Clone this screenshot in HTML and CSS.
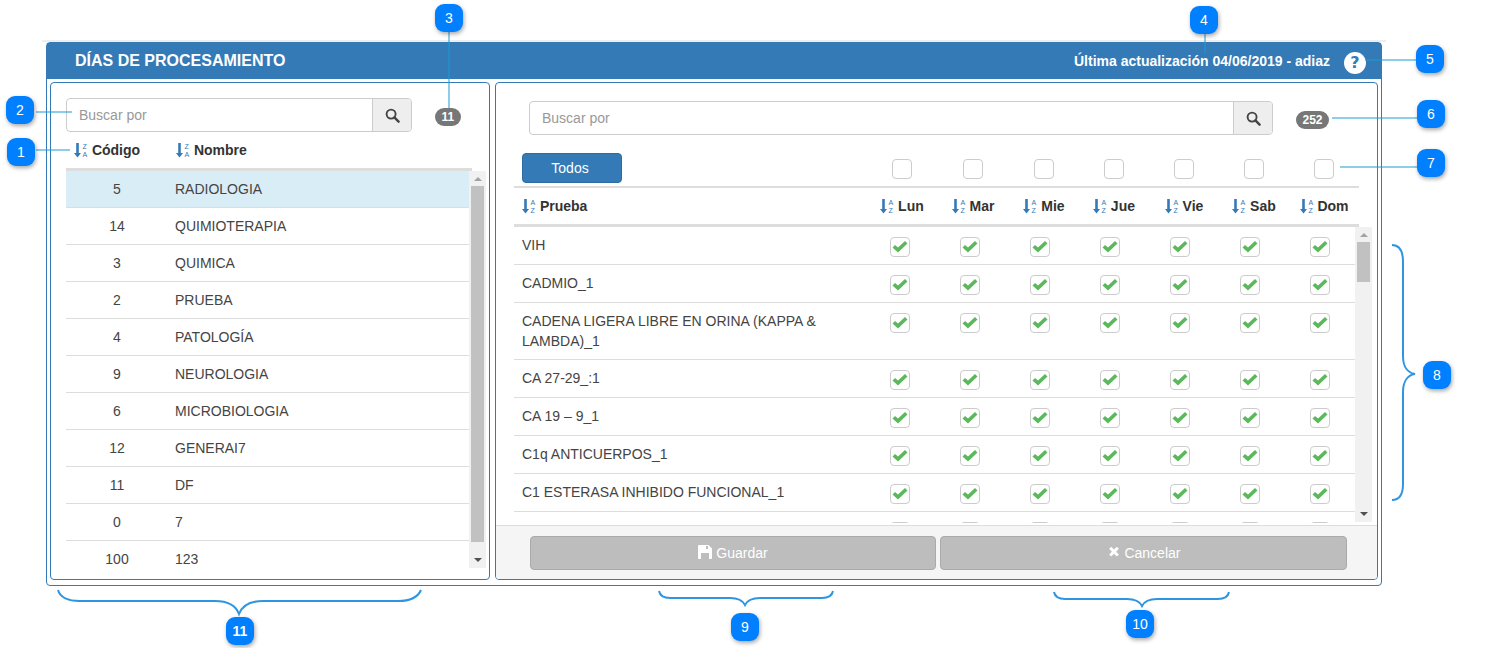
FILE: index.html
```html
<!DOCTYPE html>
<html lang="en">
<head>
  <meta charset="UTF-8" />
  <title>Días de procesamiento</title>
  <link rel="stylesheet" href="styles.css">
</head>
<body>

  <svg class="defs" width="0" height="0">
    <symbol id="i-check" viewBox="0 0 18 18"><path d="M1.500 9.500 4 7 7 9.500 14 3 16.500 5.500 7 14.500z"/></symbol>
    <symbol id="i-search" viewBox="0 0 16 16"><circle cx="6.500" cy="6.500" r="4.800" fill="none" stroke-width="2"/><path d="M10 10l4.500 4.500" fill="none" stroke-width="2.600" stroke-linecap="round"/></symbol>
    <symbol id="i-arrow" viewBox="0 0 14 16"><path d="M2.200 1h2.600v10h2.200L3.500 15.500 0 11h2.200z"/></symbol>
  </svg>

  <div class="page">
    <div class="top-rule"></div>

    <div class="card">
      <header class="card-head">
        <h1>DÍAS DE PROCESAMIENTO</h1>
        <span class="updated">Última actualización 04/06/2019 - adiaz</span>
        <span class="help">?</span>
      </header>

      <div class="panels">
        <!-- areas -->
        <section class="panel panel-left">
          <div class="search-row">
            <div class="search search-sm">
              <span class="search-text">Buscar por</span>
              <span class="search-btn"><svg class="ico-search"><use href="#i-search"/></svg></span>
            </div>
            <span class="badge badge-sm">11</span>
          </div>

          <div class="area-head">
            <span class="area-code"><svg class="ico-sort" viewBox="0 0 14 16"><use href="#i-arrow"/><text x="8.500" y="6.500" class="mini">Z</text><text x="8.500" y="14.500" class="mini">A</text></svg> Código</span>
            <span class="area-name"><svg class="ico-sort" viewBox="0 0 14 16"><use href="#i-arrow"/><text x="8.500" y="6.500" class="mini">Z</text><text x="8.500" y="14.500" class="mini">A</text></svg> Nombre</span>
          </div>

          <div class="area-body">
            <div class="area-list">
              <div class="area-row selected"><span>5</span><span>RADIOLOGIA</span></div>
              <div class="area-row"><span>14</span><span>QUIMIOTERAPIA</span></div>
              <div class="area-row"><span>3</span><span>QUIMICA</span></div>
              <div class="area-row"><span>2</span><span>PRUEBA</span></div>
              <div class="area-row"><span>4</span><span>PATOLOGÍA</span></div>
              <div class="area-row"><span>9</span><span>NEUROLOGIA</span></div>
              <div class="area-row"><span>6</span><span>MICROBIOLOGIA</span></div>
              <div class="area-row"><span>12</span><span>GENERAI7</span></div>
              <div class="area-row"><span>11</span><span>DF</span></div>
              <div class="area-row"><span>0</span><span>7</span></div>
              <div class="area-row"><span>100</span><span>123</span></div>
            </div>
            <div class="scrollbar scrollbar-left">
              <i class="arrow-up"></i>
              <i class="thumb"></i>
              <i class="arrow-down"></i>
            </div>
          </div>
        </section>

        <!-- pruebas -->
        <section class="panel panel-right">
          <div class="test-main">
            <div class="search-row search-row-right">
              <div class="search search-lg">
                <span class="search-text">Buscar por</span>
                <span class="search-btn"><svg class="ico-search"><use href="#i-search"/></svg></span>
              </div>
              <span class="badge badge-lg">252</span>
            </div>

            <div class="day-grid toolbar">
              <div><button class="btn-all">Todos</button></div>
              <i class="box"></i><i class="box"></i><i class="box"></i><i class="box"></i><i class="box"></i><i class="box"></i><i class="box"></i>
            </div>

            <div class="day-grid test-head">
              <span class="test-title"><svg class="ico-sort" viewBox="0 0 14 16"><use href="#i-arrow"/><text x="8.500" y="6.500" class="mini">A</text><text x="8.500" y="14.500" class="mini">Z</text></svg> Prueba</span>
              <span><svg class="ico-sort" viewBox="0 0 14 16"><use href="#i-arrow"/><text x="8.500" y="6.500" class="mini">A</text><text x="8.500" y="14.500" class="mini">Z</text></svg> Lun</span>
              <span><svg class="ico-sort" viewBox="0 0 14 16"><use href="#i-arrow"/><text x="8.500" y="6.500" class="mini">A</text><text x="8.500" y="14.500" class="mini">Z</text></svg> Mar</span>
              <span><svg class="ico-sort" viewBox="0 0 14 16"><use href="#i-arrow"/><text x="8.500" y="6.500" class="mini">A</text><text x="8.500" y="14.500" class="mini">Z</text></svg> Mie</span>
              <span><svg class="ico-sort" viewBox="0 0 14 16"><use href="#i-arrow"/><text x="8.500" y="6.500" class="mini">A</text><text x="8.500" y="14.500" class="mini">Z</text></svg> Jue</span>
              <span><svg class="ico-sort" viewBox="0 0 14 16"><use href="#i-arrow"/><text x="8.500" y="6.500" class="mini">A</text><text x="8.500" y="14.500" class="mini">Z</text></svg> Vie</span>
              <span><svg class="ico-sort" viewBox="0 0 14 16"><use href="#i-arrow"/><text x="8.500" y="6.500" class="mini">A</text><text x="8.500" y="14.500" class="mini">Z</text></svg> Sab</span>
              <span><svg class="ico-sort" viewBox="0 0 14 16"><use href="#i-arrow"/><text x="8.500" y="6.500" class="mini">A</text><text x="8.500" y="14.500" class="mini">Z</text></svg> Dom</span>
            </div>

            <div class="test-body">
              <div class="test-list">
                <div class="test-row"><span class="test-name">VIH</span>
                  <i class="box on"><svg><use href="#i-check"/></svg></i><i class="box on"><svg><use href="#i-check"/></svg></i><i class="box on"><svg><use href="#i-check"/></svg></i><i class="box on"><svg><use href="#i-check"/></svg></i><i class="box on"><svg><use href="#i-check"/></svg></i><i class="box on"><svg><use href="#i-check"/></svg></i><i class="box on"><svg><use href="#i-check"/></svg></i>
                </div>
                <div class="test-row"><span class="test-name">CADMIO_1</span>
                  <i class="box on"><svg><use href="#i-check"/></svg></i><i class="box on"><svg><use href="#i-check"/></svg></i><i class="box on"><svg><use href="#i-check"/></svg></i><i class="box on"><svg><use href="#i-check"/></svg></i><i class="box on"><svg><use href="#i-check"/></svg></i><i class="box on"><svg><use href="#i-check"/></svg></i><i class="box on"><svg><use href="#i-check"/></svg></i>
                </div>
                <div class="test-row"><span class="test-name">CADENA LIGERA LIBRE EN ORINA (KAPPA &amp; LAMBDA)_1</span>
                  <i class="box on"><svg><use href="#i-check"/></svg></i><i class="box on"><svg><use href="#i-check"/></svg></i><i class="box on"><svg><use href="#i-check"/></svg></i><i class="box on"><svg><use href="#i-check"/></svg></i><i class="box on"><svg><use href="#i-check"/></svg></i><i class="box on"><svg><use href="#i-check"/></svg></i><i class="box on"><svg><use href="#i-check"/></svg></i>
                </div>
                <div class="test-row"><span class="test-name">CA 27-29_:1</span>
                  <i class="box on"><svg><use href="#i-check"/></svg></i><i class="box on"><svg><use href="#i-check"/></svg></i><i class="box on"><svg><use href="#i-check"/></svg></i><i class="box on"><svg><use href="#i-check"/></svg></i><i class="box on"><svg><use href="#i-check"/></svg></i><i class="box on"><svg><use href="#i-check"/></svg></i><i class="box on"><svg><use href="#i-check"/></svg></i>
                </div>
                <div class="test-row"><span class="test-name">CA 19 – 9_1</span>
                  <i class="box on"><svg><use href="#i-check"/></svg></i><i class="box on"><svg><use href="#i-check"/></svg></i><i class="box on"><svg><use href="#i-check"/></svg></i><i class="box on"><svg><use href="#i-check"/></svg></i><i class="box on"><svg><use href="#i-check"/></svg></i><i class="box on"><svg><use href="#i-check"/></svg></i><i class="box on"><svg><use href="#i-check"/></svg></i>
                </div>
                <div class="test-row"><span class="test-name">C1q ANTICUERPOS_1</span>
                  <i class="box on"><svg><use href="#i-check"/></svg></i><i class="box on"><svg><use href="#i-check"/></svg></i><i class="box on"><svg><use href="#i-check"/></svg></i><i class="box on"><svg><use href="#i-check"/></svg></i><i class="box on"><svg><use href="#i-check"/></svg></i><i class="box on"><svg><use href="#i-check"/></svg></i><i class="box on"><svg><use href="#i-check"/></svg></i>
                </div>
                <div class="test-row"><span class="test-name">C1 ESTERASA INHIBIDO FUNCIONAL_1</span>
                  <i class="box on"><svg><use href="#i-check"/></svg></i><i class="box on"><svg><use href="#i-check"/></svg></i><i class="box on"><svg><use href="#i-check"/></svg></i><i class="box on"><svg><use href="#i-check"/></svg></i><i class="box on"><svg><use href="#i-check"/></svg></i><i class="box on"><svg><use href="#i-check"/></svg></i><i class="box on"><svg><use href="#i-check"/></svg></i>
                </div>
                <div class="test-row"><span class="test-name"></span>
                  <i class="box on"></i><i class="box on"></i><i class="box on"></i><i class="box on"></i><i class="box on"></i><i class="box on"></i><i class="box on"></i>
                </div>
              </div>
              <div class="scrollbar scrollbar-right">
                <i class="arrow-up"></i>
                <i class="thumb"></i>
                <i class="arrow-down"></i>
              </div>
            </div>
          </div>

          <footer class="panel-foot">
            <button class="btn-off btn-save"><svg class="ico-save" viewBox="0 0 14 14"><path fill-rule="evenodd" d="M0 1a1 1 0 0 1 1-1H10.500L14 3.500V13a1 1 0 0 1-1 1H1a1 1 0 0 1-1-1zM8 1v3h2V1zM3 8v6h8V8z"/></svg> Guardar</button>
            <button class="btn-off"><svg class="ico-times" viewBox="0 0 1408 1792"><path d="M1298 1214q0 40-28 68l-136 136q-28 28-68 28t-68-28l-294-294-294 294q-28 28-68 28t-68-28l-136-136q-28-28-28-68t28-68l294-294-294-294q-28-28-28-68t28-68l136-136q28-28 68-28t68 28l294 294 294-294q28-28 68-28t68 28l136 136q28 28 28 68t-28 68l-294 294 294 294q28 28 28 68z"/></svg> Cancelar</button>
          </footer>
        </section>
      </div>
    </div>

    <!-- callouts over the screenshot -->
    <svg class="callouts" width="1496" height="648" viewBox="0 0 1496 648">
      <g class="leader">
        <path d="M36 150H70"/>
        <path d="M36 112H72"/>
        <path d="M449 32V108"/>
        <path d="M1205 34V53"/>
        <path d="M1365 60H1416"/>
        <path d="M1332 118H1417"/>
        <path d="M1340 167H1417"/>
      </g>
      <g class="brace">
        <path d="M1392 245C1400 245 1403 252 1403 262V356C1403 367 1408 373 1415 374C1408 375 1403 381 1403 392V484C1403 494 1400 500 1392 500"/>
        <path d="M58 590C60 597 68 601 80 601H215C228 601 236 606 239 614C242 606 250 601 263 601H398C410 601 418 597 421 590"/>
        <path d="M659 591C660 596 664 598 670 598H730C738 598 743 601 745 605C747 601 752 598 760 598H822C828 598 832 596 833 591"/>
        <path d="M1054 592C1055 597 1059 599 1065 599H1127C1135 599 1140 602 1142 606C1144 602 1149 599 1157 599H1218C1224 599 1228 597 1229 592"/>
      </g>
    </svg>

    <span class="tag tag-1">1</span>
    <span class="tag tag-2">2</span>
    <span class="tag tag-3">3</span>
    <span class="tag tag-4">4</span>
    <span class="tag tag-5">5</span>
    <span class="tag tag-6">6</span>
    <span class="tag tag-7">7</span>
    <span class="tag tag-8">8</span>
    <span class="tag tag-9">9</span>
    <span class="tag tag-10">10</span>
    <span class="tag tag-11">11</span>
  </div>

</body>
</html>
```

FILE: styles.css
```css
* {
  box-sizing: border-box;
}
body {
  margin: 0;
  background: white;
  font-family: "Liberation Sans", Arial, sans-serif;
  font-size: 14px;
  line-height: 20px;
  color: #333;
}
.defs {
  position: absolute;
}
.mini {
  font-family: "Liberation Sans", Arial, sans-serif;
  font-size: 7px;
  font-weight: normal;
}
.page {
  position: relative;
  width: 1496px;
  height: 648px;
  padding: 40px 0 0 42px;
  overflow: hidden;
}
.top-rule {
  width: 1344px;
  height: 2px;
  background: #eee;
}

/* card */
.card {
  width: 1336px;
  height: 544px;
  margin-left: 4px;
  border: 1px solid #337ab7;
  border-radius: 4px;
}
.card-head {
  display: flex;
  align-items: center;
  height: 36px;
  padding: 0 15px 0 28px;
  background: #337ab7;
  color: white;
  font-weight: bold;
}
.card-head h1 {
  flex: 1;
  margin: 0;
  font-size: 16px;
}
.updated {
  margin-right: 14px;
}
.help {
  display: flex;
  align-items: center;
  justify-content: center;
  width: 22px;
  height: 22px;
  margin-top: 4px;
  border-radius: 50%;
  background: white;
  color: #337ab7;
  font-family: "DejaVu Sans", sans-serif;
  font-size: 16px;
}
.panels {
  display: flex;
  gap: 5px;
  padding: 3px 2px 0 3px;
}
.panel {
  height: 498px;
  border: 1px solid #337ab7;
  border-radius: 4px;
  overflow: hidden;
}
.panel-left {
  width: 440px;
  padding: 15px 17px 0 15px;
}
.panel-right {
  display: flex;
  flex-direction: column;
  width: 883px;
}

/* search */
.search-row {
  display: flex;
  align-items: flex-start;
}
.search {
  display: flex;
  height: 34px;
  border: 1px solid #ccc;
  border-radius: 4px;
}
.search-sm {
  width: 346px;
}
.search-lg {
  width: 744px;
}
.search-text {
  flex: 1;
  padding: 6px 12px;
  color: #999;
}
.search-btn {
  display: flex;
  align-items: center;
  justify-content: center;
  width: 39px;
  background: #eee;
  border-left: 1px solid #ccc;
  border-radius: 0 3px 3px 0;
}
.ico-search {
  width: 15px;
  height: 15px;
  fill: #444;
  stroke: #444;
}
.badge {
  height: 18px;
  margin-top: 10px;
  margin-left: 23px;
  padding: 0 6.5px;
  border-radius: 10px;
  background: #777;
  color: white;
  font-size: 12px;
  font-weight: bold;
  line-height: 18px;
}

/* areas */
.area-head {
  display: flex;
  height: 39px;
  padding-top: 8px;
  font-weight: bold;
  border-bottom: 3px solid #ddd;
}
.area-code {
  width: 102px;
  padding-left: 8px;
}
.area-name {
  padding-left: 8px;
}
.ico-sort {
  width: 14px;
  height: 16px;
  fill: #337ab7;
  vertical-align: -3px;
}
.area-body {
  display: flex;
  margin-right: -14px;
}
.area-list {
  flex: 1;
  height: 408px;
  overflow: hidden;
}
.area-row {
  display: grid;
  grid-template-columns: 102px 1fr;
  height: 37px;
  padding-top: 8px;
  border-bottom: 1px solid #ddd;
  color: #444;
}
.area-row:last-child {
  border-bottom: none;
}
.area-row span:first-child {
  text-align: center;
}
.area-row span:last-child {
  padding-left: 7px;
}
.area-row.selected {
  background: #d9edf7;
}

/* fake scrollbars, the page itself never scrolls */
.scrollbar {
  display: flex;
  flex-direction: column;
  align-items: center;
  flex: none;
  width: 17px;
  background: #f1f1f1;
}
.scrollbar-left {
  height: 397px;
}
.scrollbar-right {
  height: 295px;
}
.thumb {
  display: block;
  width: 13px;
  margin-top: 5px;
  background: #c1c1c1;
}
.scrollbar-left .thumb {
  height: 356px;
}
.scrollbar-right .thumb {
  height: 40px;
}
.arrow-up,
.arrow-down {
  display: block;
  width: 0;
  height: 0;
  border-left: 4px solid transparent;
  border-right: 4px solid transparent;
}
.arrow-up {
  margin-top: 6px;
  border-bottom: 4px solid #a3a3a3;
}
.arrow-down {
  margin-top: auto;
  margin-bottom: 6px;
  border-top: 4px solid #505050;
}

/* pruebas */
.test-main {
  height: 442px;
  padding: 18px 18px 0;
}
.search-row-right {
  margin-left: 15px;
}
.day-grid {
  display: grid;
  grid-template-columns: 353px 70px 72px 70px 70px 70px 70px 70px;
  align-items: center;
  justify-items: center;
}
.day-grid > :first-child {
  justify-self: start;
}
.toolbar {
  height: 33px;
  margin-top: 18px;
  align-items: start;
}
.toolbar .box {
  margin-top: 6px;
}
.btn-all {
  width: 100px;
  height: 30px;
  margin-left: 8px;
  padding: 0 4px 0 0;
  border: 1px solid #2e6da4;
  border-radius: 4px;
  background: #337ab7;
  color: white;
  font: 14px "Liberation Sans", Arial, sans-serif;
}
.box {
  display: block;
  width: 20px;
  height: 20px;
  border: 1px solid #ccc;
  border-radius: 4px;
  background: white;
}
.box svg {
  display: block;
  width: 18px;
  height: 18px;
  fill: #5cb85c;
}
.test-head {
  height: 41px;
  border-top: 2px solid #ddd;
  border-bottom: 3px solid #ddd;
  font-weight: bold;
}
.test-title {
  padding-left: 8px;
}
.test-body {
  display: flex;
  margin-right: -13px;
}
.test-list {
  flex: 1;
  height: 296px;
  overflow: hidden;
}
.test-row {
  display: grid;
  grid-template-columns: 351px repeat(7, 70px);
  justify-items: center;
  border-bottom: 1px solid #ddd;
  color: #444;
}
.test-row .box {
  margin: 10px 0 7px;
}
.test-name {
  justify-self: start;
  padding: 8px;
}
.panel-foot {
  display: flex;
  flex: 1;
  gap: 4px;
  padding: 10px 30px 0 34px;
  background: #f5f5f5;
  border-top: 1px solid #ddd;
}
.btn-off {
  flex: 1;
  height: 34px;
  border: 1px solid #aaa;
  border-radius: 4px;
  background: #bdbdbd;
  color: white;
  font: 14px "Liberation Sans", Arial, sans-serif;
}
.btn-save {
  flex: none;
  width: 406px;
}
.ico-save,
.ico-times {
  width: 14px;
  height: 14px;
  fill: white;
  vertical-align: -1px;
}

/* callouts */
.callouts {
  position: absolute;
  left: 0;
  top: 0;
}
.leader path {
  fill: none;
  stroke: #1a9bd7;
  stroke-width: 1;
}
.brace path {
  fill: none;
  stroke: #2f95e0;
  stroke-width: 2;
}
.tag {
  position: absolute;
  display: flex;
  align-items: center;
  justify-content: center;
  width: 28px;
  height: 28px;
  border-radius: 9px;
  background: #0080ff;
  box-shadow: 1px 2px 4px rgba(0,0,0,0.35);
  color: white;
  font-size: 14px;
}
.tag-1 { left: 7px; top: 138px; }
.tag-2 { left: 6px; top: 96px; }
.tag-3 { left: 435px; top: 4px; }
.tag-4 { left: 1190px; top: 6px; }
.tag-5 { left: 1416px; top: 45px; }
.tag-6 { left: 1417px; top: 100px; }
.tag-7 { left: 1417px; top: 149px; }
.tag-8 { left: 1423px; top: 361px; }
.tag-9 { left: 731px; top: 613px; }
.tag-10 { left: 1126px; top: 610px; }
.tag-11 { left: 226px; top: 617px; font-weight: bold; }
```
